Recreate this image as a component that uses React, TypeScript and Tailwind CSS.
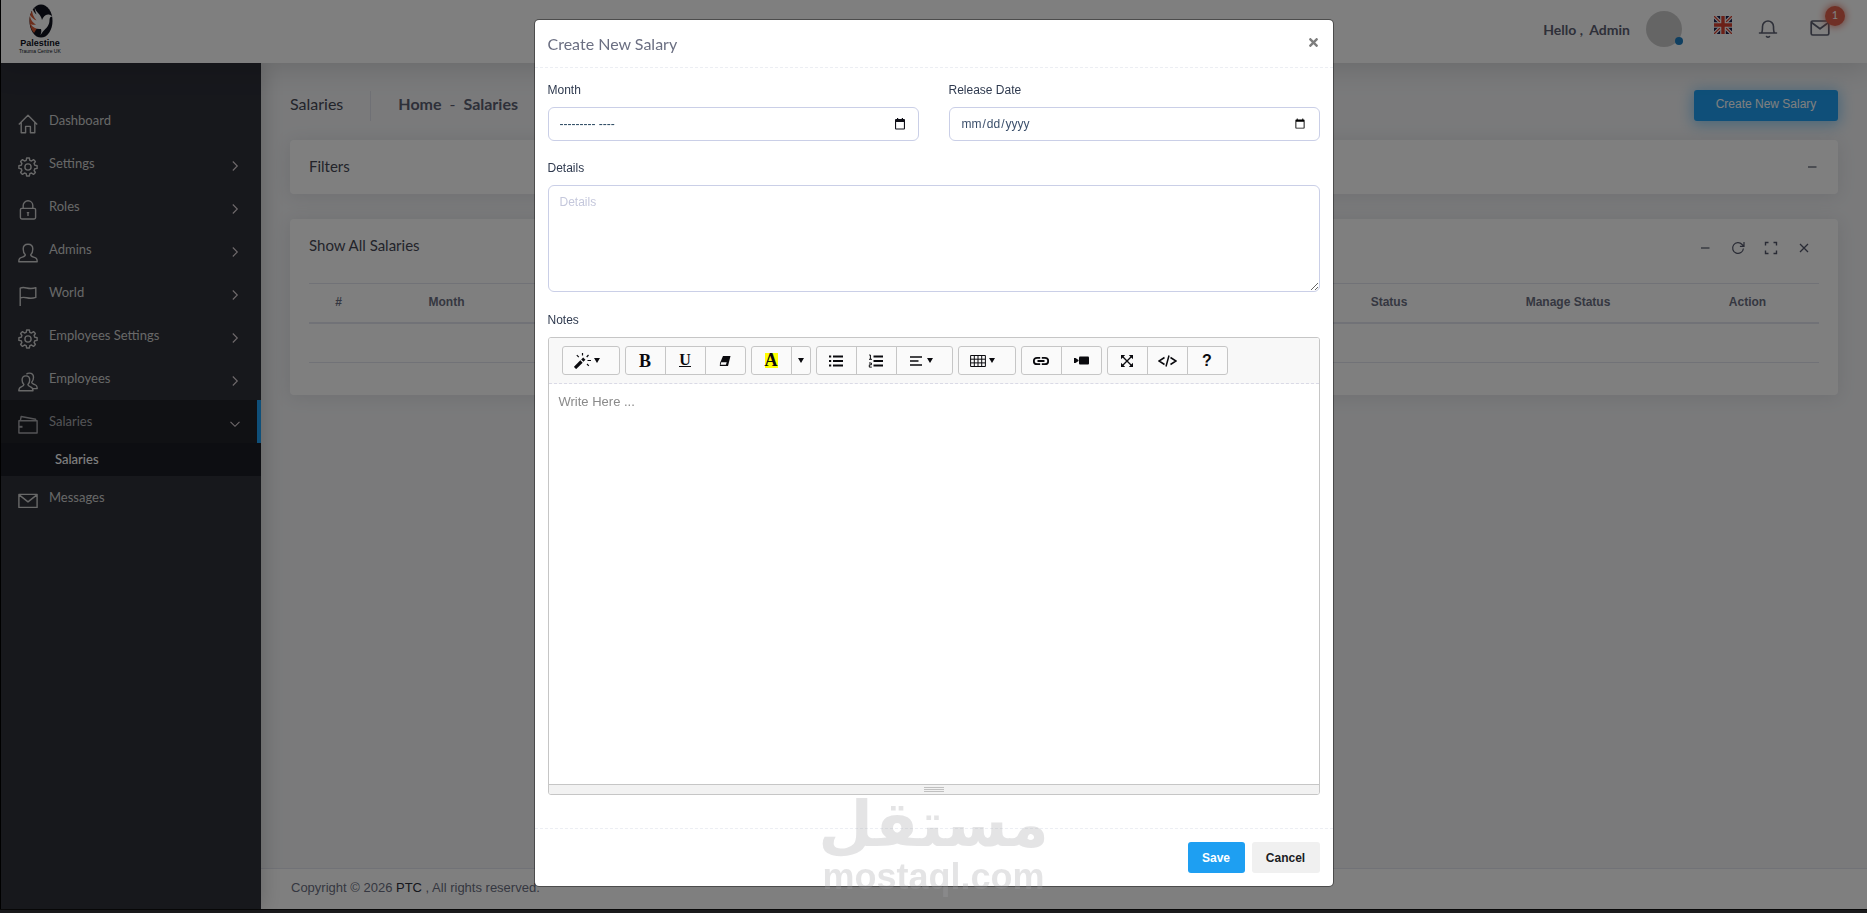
import React from "react";
import { FaTimes } from "react-icons/fa";

type IconProps = { className?: string; children: React.ReactNode };

function LineIcon({ className = "size-5", children }: IconProps) {
  return (
    <svg viewBox="0 0 20 20" className={className} fill="none" stroke="currentColor" strokeWidth="1.400" strokeLinejoin="round" aria-hidden="true">
      {children}
    </svg>
  );
}

const HomeIcon = () => (
  <LineIcon>
    <path d="M.8 10.400 10 1.200l9.200 9.200M3.200 8.600v10.200h4.400v-6.400h4.800v6.400h4.400V8.600" />
  </LineIcon>
);
const GearIcon = () => (
  <LineIcon>
    <circle cx="10" cy="10" r="3.100" />
    <path d="M8.600 1h2.800l.4 2.300 1.700.7 2-1.400 1.900 1.900-1.300 2 .7 1.700 2.300.4v2.800l-2.300.4-.7 1.700 1.300 2-1.900 1.900-2-1.400-1.700.7-.4 2.300H8.600l-.4-2.300-1.700-.7-2 1.400-1.900-1.900 1.300-2-.7-1.700L.9 11.400V8.600l2.300-.4.7-1.700-1.300-2 1.900-1.900 2 1.400 1.700-.7z" />
  </LineIcon>
);
const LockIcon = () => (
  <LineIcon>
    <rect x="2.400" y="8.400" width="15.200" height="10.600" rx="1.400" />
    <path d="M5.200 8.400V5.600a4.800 4.800 0 0 1 9.600 0v2.800M10 12v4M8.800 12.600h2.400" />
  </LineIcon>
);
const UserIcon = () => (
  <LineIcon>
    <path d="M.8 18.800c0-3.300 1-3.900 3.600-4.700 2-.6 2.900-.9 2.900-2.300-1.600-1.400-2.100-3.500-2.100-5.800C5.200 3 7 1.200 10 1.200S14.800 3 14.800 6c0 2.300-.5 4.400-2.100 5.800 0 1.400.9 1.700 2.900 2.300 2.600.8 3.600 1.400 3.600 4.700z" />
  </LineIcon>
);
const UsersIcon = () => (
  <LineIcon>
    <path d="M.8 18.800c0-2.900.8-3.500 2.900-4.200 1.500-.5 2.200-.8 2.200-2C4.600 11.400 4.100 9.900 4.100 8c0-2.600 1.400-4.100 3.800-4.100S11.700 5.400 11.700 8c0 1.900-.5 3.400-1.800 4.600 0 1.200.7 1.500 2.200 2 2.100.7 2.900 1.300 2.900 4.200z" />
    <path d="M8.400 2.200c.8-.8 1.800-1.100 2.900-1.100 2.700 0 4.200 1.500 4.200 4.200 0 2-.5 3.700-1.800 4.900 0 1.300.7 1.500 2.400 2.100 2.300.8 3.100 1.300 3.100 4.300h-4.600" />
  </LineIcon>
);
const FlagIcon = () => (
  <LineIcon>
    <path d="M2.200 20V2.200c5-2.400 8 2.200 15.600-.6v9.800c-7.600 2.800-10.600-1.800-15.600.6" />
  </LineIcon>
);
const WalletIcon = () => (
  <LineIcon>
    <path d="M.9 5.700h18.200v12.300H.9zM2.400 5.400l.8-3.900L17.600 4.300v1.400" />
    <path d="M1 11.800h3.500" strokeWidth="2" />
  </LineIcon>
);
const MailIcon = () => (
  <LineIcon>
    <path d="M.9 3.400h18.200v13H.9zM1.200 3.900l8.800 7 8.800-7" />
  </LineIcon>
);

const Chevron = ({ down = false }: { down?: boolean }) => (
  <svg viewBox="0 0 10 10" className="size-[10px]" fill="none" stroke="currentColor" strokeWidth="1.100" aria-hidden="true">
    {down ? <path d="M.5 2.800 5 7.300l4.500-4.500" /> : <path d="M2.800.5 7.300 5 2.800 9.500" />}
  </svg>
);

const menu = [
  { label: "Dashboard", icon: HomeIcon, leaf: true },
  { label: "Settings", icon: GearIcon },
  { label: "Roles", icon: LockIcon },
  { label: "Admins", icon: UserIcon },
  { label: "World", icon: FlagIcon },
  { label: "Employees Settings", icon: GearIcon },
  { label: "Employees", icon: UsersIcon },
  { label: "Salaries", icon: WalletIcon, open: true },
  { label: "Messages", icon: MailIcon, leaf: true },
];

function Sidebar() {
  return (
    <nav className="z-10 w-[261px] shrink-0 border-l border-black bg-[#2e3039] pt-9 font-[Lato,sans-serif] text-[13px] text-[#d0d0d0] shadow-[1px_0_20px_rgba(0,0,0,0.2)]">
      <ul>
        {menu.map(({ label, icon: Icon, leaf, open }) => (
          <li key={label}>
            <a
              href="#"
              className={
                open
                  ? "flex h-[43px] items-center border-r-4 border-[#1e9ff2] bg-[#202229] pr-[17px] pl-[17px] text-[#a8a9ad]"
                  : "flex h-[43px] items-center pr-[21px] pl-[17px]"
              }
            >
              <span className="pt-[7px]">
                <Icon />
              </span>
              <span className="ml-[11px] flex-1">{label}</span>
              {!leaf && (
                <span className="pt-1 text-[#e0d5d8]">
                  <Chevron down={open} />
                </span>
              )}
            </a>
            {open && (
              <a href="#" className="flex h-[33px] items-center bg-[#1b1c24] pl-[54px] font-medium text-white">
                Salaries
              </a>
            )}
          </li>
        ))}
      </ul>
    </nav>
  );
}

function Logo() {
  return (
    <a href="#" className="flex flex-col items-center self-start pt-[2px] font-['Liberation_Sans',sans-serif] text-[#0c1020]">
      <svg viewBox="0 0 26 36" className="h-9 w-[26px]" aria-hidden="true">
        <ellipse cx="14" cy="19" rx="11.500" ry="16.500" fill="#10131f" />
        <path d="M6 7.500C1 13 1.500 25 7 31l5-8z" fill="#d95a35" />
        <path d="M8 1c-1 4 0 7 3 10 2 2 3.500 4 4 7 1-3 3-5.500 6-5.500 1.500 0 2.500.5 4.500 2-2 0-3 1-3 3.500 0 6-3.500 8-6.500 11.500L13.500 33c1-3 1-4.500.5-6-4 .5-8-1-10.500-5 2 1 4 1 5.500.5C5.500 20.500 3 17 3 13c2 3 4 4.500 6.500 5.500C6.500 15 4.500 11 5 6c1 3 2.500 5 4.500 6.500C8 9 7 5 8 1z" fill="#fff" />
      </svg>
      <span className="text-[9px] leading-[10px] font-bold">Palestine</span>
      <span className="text-[5px] leading-[6px]">Trauma Centre UK</span>
    </a>
  );
}

function UkFlag() {
  return (
    <svg viewBox="0 0 18 18" className="size-[18px]" aria-label="English">
      <path fill="#1b1f4e" d="M0 0h18v18H0z" />
      <path d="M0 0l18 18M18 0 0 18" stroke="#fff" strokeWidth="3.600" />
      <path d="M0 0l18 18M18 0 0 18" stroke="#d8402f" strokeWidth="1.300" />
      <path d="M9 0v18M0 9h18" stroke="#fff" strokeWidth="5.600" />
      <path d="M9 0v18M0 9h18" stroke="#d8402f" strokeWidth="3.400" />
    </svg>
  );
}

function TopBar() {
  return (
    <header className="z-20 flex h-[63px] items-center justify-between border-l border-black bg-white pr-[37px] pl-[18px] text-[#5c6072] shadow-[0_2px_30px_2px_rgba(0,0,0,0.15)]">
      <Logo />
      <div className="flex items-center pb-[6px]">
        <span className="pt-[2px] font-[Lato,sans-serif] text-[14px] font-bold whitespace-pre">Hello ,  Admin</span>
        <span className="relative ml-4 size-9 rounded-full bg-[#cbcbcb]">
          <span className="absolute right-[-1px] bottom-[2px] size-2 rounded-full bg-[#1e7fc2]" />
        </span>
        <a href="#" className="mr-[26px] ml-8 pb-2">
          <UkFlag />
        </a>
        <button type="button" aria-label="Notifications">
          <svg viewBox="0 0 20 20" className="size-5" fill="none" stroke="currentColor" strokeWidth="1.600" strokeLinejoin="round" strokeLinecap="round">
            <path d="M1.500 14h17M3.500 14c1-1.300 1-3 1-6.500a5.500 5.500 0 0 1 11 0c0 3.500 0 5.200 1 6.500M8.500 17.500c.8.900 2.200.9 3 0" />
          </svg>
        </button>
        <button type="button" aria-label="Inbox" className="relative ml-8">
          <svg viewBox="0 0 20 20" className="size-5" fill="none" stroke="currentColor" strokeWidth="1.700" strokeLinejoin="round">
            <rect x="1.200" y="2" width="17.600" height="14" rx="1.500" />
            <path d="m1.500 3.500 8.500 6.300 8.500-6.300" />
          </svg>
          <span className="absolute -top-[13px] -right-[15px] flex size-5 items-center justify-center rounded-full bg-[#e0614c] font-[Lato,sans-serif] text-[11px] text-white shadow-[0_0_8px_#e0614c]">
            1
          </span>
        </button>
      </div>
    </header>
  );
}

function CardTools({ full = false }: { full?: boolean }) {
  return (
    <div className="flex items-center gap-[19px] text-[#53576a]">
      <button type="button" aria-label="Collapse">
        <svg viewBox="0 0 14 14" className="size-[14px]" fill="none" stroke="currentColor" strokeWidth="1.200">
          <path d="M3 7h8.500" />
        </svg>
      </button>
      {full && (
        <>
          <button type="button" aria-label="Reload">
            <svg viewBox="0 0 14 14" className="size-[14px]" fill="none" stroke="currentColor" strokeWidth="1.200">
              <path d="M12.400 7.500a5.400 5.400 0 1 1-1.300-4L13 5.200M13 1v4.300H8.900" />
            </svg>
          </button>
          <button type="button" aria-label="Expand">
            <svg viewBox="0 0 14 14" className="size-[14px]" fill="none" stroke="currentColor" strokeWidth="1.400">
              <path d="M1.500 4.500v-3h3M9.500 1.500h3v3M12.500 9.500v3h-3M4.500 12.500h-3v-3" />
            </svg>
          </button>
          <button type="button" aria-label="Close card">
            <svg viewBox="0 0 14 14" className="size-[14px]" fill="none" stroke="currentColor" strokeWidth="1.300">
              <path d="m3 3 8 8M11 3l-8 8" />
            </svg>
          </button>
        </>
      )}
    </div>
  );
}

const th = "h-[39px] border-t border-b-2 border-[#e3e5ee] pb-[2px] font-bold";

function Content() {
  return (
    <main className="flex-1 px-[29px] pt-[27px]">
      <div className="flex h-[31px] items-center font-[Lato,sans-serif] text-[16px] text-[#464855]">
        <h3 className="pb-1">Salaries</h3>
        <span className="ml-[27px] h-[30px] border-l border-[#dfe1ea]" />
        <nav className="ml-[27px] flex gap-2 pb-1 font-bold text-[#5c6072]">
          <a href="#">Home</a>
          <span className="font-normal">-</span>
          <a href="#">Salaries</a>
        </nav>
        <button
          type="button"
          className="ml-auto h-[31px] w-36 rounded-[3px] bg-[#1e9ff2] pb-1 font-['Liberation_Sans',sans-serif] text-[12px] text-white shadow-[0_2px_14px_2px_rgba(30,159,242,0.45)]"
        >
          Create New Salary
        </button>
      </div>

      <section className="mt-[19px] flex h-[54px] items-center justify-between rounded bg-white pr-[19px] pl-[19px] shadow-[0_2px_18px_1px_rgba(49,53,72,0.1)]">
        <h4 className="pb-[2px] font-[Lato,sans-serif] text-[15px] text-[#464855]">Filters</h4>
        <CardTools />
      </section>

      <section className="mt-[25px] rounded bg-white px-[19px] pb-8 shadow-[0_2px_18px_1px_rgba(49,53,72,0.1)]">
        <div className="flex h-16 items-center justify-between pr-2 pb-[10px]">
          <h4 className="pb-[2px] font-[Lato,sans-serif] text-[15px] text-[#464855]">Show All Salaries</h4>
          <span className="pt-1">
            <CardTools full />
          </span>
        </div>
        <table className="w-full table-fixed border-collapse font-['Liberation_Sans',sans-serif] text-[12px] text-[#6b6f82]">
          <colgroup>
            <col className="w-[59px]" />
            <col className="w-[157px]" />
            <col />
            <col className="w-[142px]" />
            <col className="w-[216px]" />
            <col className="w-[143px]" />
          </colgroup>
          <thead>
            <tr>
              <th className={th}>#</th>
              <th className={th}>Month</th>
              <td className="h-[39px] border-t border-b-2 border-[#e3e5ee]" />
              <th className={th}>Status</th>
              <th className={th}>Manage Status</th>
              <th className={th}>Action</th>
            </tr>
          </thead>
          <tbody>
            <tr>
              <td colSpan={6} className="h-10 border-b border-[#e3e5ee]" />
            </tr>
          </tbody>
        </table>
      </section>
    </main>
  );
}

const btn = "flex h-[29px] w-[41px] items-center justify-center border border-[#c6c6c6] bg-[#fafafa] -ml-px first:ml-0 first:rounded-l-[3px] last:rounded-r-[3px]";
const wideBtn = "flex h-[29px] w-[58px] items-center justify-center gap-[3px] border border-[#c6c6c6] bg-[#fafafa] first:rounded-l-[3px] last:rounded-r-[3px] pr-2";

const Caret = () => (
  <svg viewBox="0 0 6 5" className="h-[5px] w-[6px]" fill="currentColor" aria-hidden="true">
    <path d="M0 0h6L3 5z" />
  </svg>
);

function ToolIcon({ children }: { children: React.ReactNode }) {
  return (
    <svg viewBox="0 0 16 16" className="size-4" fill="none" stroke="currentColor" strokeWidth="1.800" aria-hidden="true">
      {children}
    </svg>
  );
}

function Toolbar() {
  return (
    <div className="flex flex-wrap gap-[5px] border-b border-dashed border-[#dadae6] bg-[#f8f8f8] px-[13px] pt-2 pb-2 text-[#0a0a0e]">
      <div className="flex">
        <button type="button" aria-label="Style" className={wideBtn}>
          <svg viewBox="0 0 17 16" className="h-4 w-[17px]" fill="none" stroke="currentColor" aria-hidden="true">
            <path d="m1 15 6.500-6.500" strokeWidth="3.200" />
            <path d="m8.300 7.700 2-2" strokeWidth="3.200" />
            <path d="M8.500 0v2.500M2.800 2.200l2 2M14.500 2l-1.800 2M13.500 7.500H17M13 11l1.800 1.800" strokeWidth="1.200" />
          </svg>
          <Caret />
        </button>
      </div>
      <div className="flex">
        <button type="button" aria-label="Bold" className={btn}>
          <span className="font-['Liberation_Serif',serif] text-[18px] leading-4 font-bold">B</span>
        </button>
        <button type="button" aria-label="Underline" className={btn}>
          <span className="border-b border-current font-['Liberation_Serif',serif] text-[16px] leading-[12px] font-bold">U</span>
        </button>
        <button type="button" aria-label="Remove Font Style" className={btn}>
          <svg viewBox="0 0 12 12" className="size-3" aria-hidden="true">
            <path d="M4 1h7.500L9 11H.8L1 8z" fill="currentColor" />
            <path d="M2.200 7.200h5.500l-.8 2.600H1.600z" fill="#fafafa" />
          </svg>
        </button>
      </div>
      <div className="flex">
        <button type="button" aria-label="Recent Color" className={btn}>
          <span className="bg-[#ffff00] font-['Liberation_Serif',serif] text-[18px] leading-[15px] font-bold">A</span>
        </button>
        <button
          type="button"
          aria-label="More Color"
          className="-ml-px flex h-[29px] w-5 items-center justify-center rounded-r-[3px] border border-[#c6c6c6] bg-[#fafafa]"
        >
          <Caret />
        </button>
      </div>
      <div className="flex">
        <button type="button" aria-label="Unordered list" className={btn}>
          <ToolIcon>
            <path d="M5 3.500h10M5 8h10M5 12.500h10M1 3.500h2.200M1 8h2.200M1 12.500h2.200" />
          </ToolIcon>
        </button>
        <button type="button" aria-label="Ordered list" className={btn}>
          <ToolIcon>
            <path d="M5.500 3.500H15M5.500 8H15M5.500 12.500H15" />
            <path d="M1.200 2h1.200v4M1 6.300h3M1 10h2.400v1.800H1.300v2.300h2.500" strokeWidth="1" />
          </ToolIcon>
        </button>
        <button
          type="button"
          aria-label="Paragraph"
          className="-ml-px flex h-[29px] w-[57px] items-center justify-center gap-[3px] rounded-r-[3px] border border-[#c6c6c6] bg-[#fafafa] pr-2"
        >
          <ToolIcon>
            <path d="M2 4h12M2 8h8.500M2 12h12" strokeWidth="1.600" />
          </ToolIcon>
          <Caret />
        </button>
      </div>
      <div className="flex">
        <button type="button" aria-label="Table" className={wideBtn}>
          <ToolIcon>
            <path d="M.6 2.500h14.800v11H.6zM.6 6.200h14.800M.6 9.900h14.800M4.300 2.500v11M8 2.500v11M11.700 2.500v11" strokeWidth="1" />
          </ToolIcon>
          <Caret />
        </button>
      </div>
      <div className="flex">
        <button type="button" aria-label="Link" className={btn}>
          <ToolIcon>
            <path d="M7.200 4.800H4a3.200 3.200 0 0 0 0 6.400h3.200M8.800 4.800H12a3.200 3.200 0 0 1 0 6.400H8.800M4.500 8h7" />
          </ToolIcon>
        </button>
        <button type="button" aria-label="Video" className={btn}>
          <svg viewBox="0 0 15 9" className="h-[9px] w-[15px]" fill="currentColor" aria-hidden="true">
            <rect x="5" y="0.500" width="10" height="8" rx="1" />
            <path d="M0 2h1.500L4.500 4V1v7-3L1.500 7H0z" />
          </svg>
        </button>
      </div>
      <div className="flex">
        <button type="button" aria-label="Full Screen" className={btn}>
          <svg viewBox="0 0 14 14" className="size-[14px]" aria-hidden="true">
            <path d="m2.500 2.500 9 9M11.500 2.500l-9 9" stroke="currentColor" strokeWidth="1.400" />
            <path d="M1 1h4.200L1 5.200zM13 1v4.200L8.800 1zM13 13H8.800L13 8.800zM1 13V8.800L5.200 13z" fill="currentColor" />
          </svg>
        </button>
        <button type="button" aria-label="Code View" className={btn}>
          <svg viewBox="0 0 19 12" className="h-3 w-[19px]" fill="none" stroke="currentColor" strokeWidth="1.500" aria-hidden="true">
            <path d="M6.500 2.500 1 6l5.500 3.500M12.500 2.500 18 6l-5.500 3.500M11 .5 8 11.500" />
          </svg>
        </button>
        <button type="button" aria-label="Help" className={btn}>
          <span className="font-['Liberation_Sans',sans-serif] text-[16px] leading-4 font-bold">?</span>
        </button>
      </div>
    </div>
  );
}

const label = "mb-2 block text-[12px] leading-[18px] text-[#2f3a4f]";
const field = "block w-full rounded-md border border-[#cacfe7] bg-white px-[11px] text-[12px] text-[#3b4f6b] outline-none";

function SalaryModal() {
  return (
    <div role="dialog" aria-labelledby="modal-title" className="relative w-[800px] rounded-[5px] border border-black/40 bg-white bg-clip-padding font-['Liberation_Sans',sans-serif]">
      <div className="flex h-12 items-center justify-between border-b border-dashed border-[#eceef3] px-[13px]">
        <h2 id="modal-title" className="font-[Lato,sans-serif] text-[16px] text-[#6b6f82]">
          Create New Salary
        </h2>
        <button type="button" aria-label="Close" className="pb-[2px] text-[#7d7d7d]">
          <FaTimes className="size-[13px]" />
        </button>
      </div>
      <form>
        <div className="px-[13px] pt-[13px]">
          <div className="grid grid-cols-2 gap-[30px]">
            <div>
              <label htmlFor="month" className={label}>
                Month
              </label>
              <div className="relative">
                <input id="month" type="text" placeholder="--------- ----" className={`${field} h-[34px] placeholder:text-[#1f3f58]`} />
                <button type="button" aria-label="Show month picker" className="absolute top-[11px] right-[13px] text-[#101018]">
                  <svg viewBox="0 0 12 12" className="size-3" aria-hidden="true">
                    <path d="M2 1h1V0h1.200v1h3.600V0H9v1h1a1 1 0 0 1 1 1v8.500a1 1 0 0 1-1 1H2a1 1 0 0 1-1-1V2a1 1 0 0 1 1-1zM2.100 4v6.400h7.800V4z" fill="currentColor" fillRule="evenodd" />
                  </svg>
                </button>
              </div>
            </div>
            <div>
              <label htmlFor="release" className={label}>
                Release Date
              </label>
              <input id="release" type="date" className={`${field} h-[34px]`} />
            </div>
          </div>
          <div className="mt-[18px]">
            <label htmlFor="details" className={label}>
              Details
            </label>
            <textarea id="details" placeholder="Details" className={`${field} h-[107px] resize-y py-[7px] placeholder:text-[#c5c8dc]`} />
          </div>
          <div className="mt-[19px]">
            <label htmlFor="notes" className={label}>
              Notes
            </label>
            <div className="overflow-hidden rounded-[3px] border border-[#c6c6c6]">
              <Toolbar />
              <textarea
                id="notes"
                placeholder="Write Here ..."
                className="block h-[400px] w-full resize-none px-[10px] py-2 text-[13px] text-[#2b335e] outline-none placeholder:text-[#8a8a8a]"
              />
              <div className="flex h-[10px] flex-col items-center justify-center gap-px border-t border-[#c6c6c6] bg-[#f2f2f2]">
                <span className="h-px w-5 bg-[#c0c0c0]" />
                <span className="h-px w-5 bg-[#c0c0c0]" />
                <span className="h-px w-5 bg-[#c0c0c0]" />
              </div>
            </div>
          </div>
        </div>
        <div className="mt-[33px] flex justify-end gap-[7px] border-t border-dashed border-[#eceef3] px-[13px] py-[13px] text-[12px] font-bold">
          <button type="submit" className="h-[31px] w-[57px] rounded-[3px] bg-[#1e9ff2] text-white">
            Save
          </button>
          <button type="button" className="h-[31px] w-[68px] rounded-[3px] bg-[#f0f0f0] text-[#1b1c24]">
            Cancel
          </button>
        </div>
      </form>
      <div className="pointer-events-none absolute bottom-[-12px] left-1/2 flex -translate-x-1/2 flex-col items-center text-[#a0a0a4] opacity-[0.28]">
        <span lang="ar" dir="rtl" className="font-['DejaVu_Sans',sans-serif] text-[63px] leading-[62px] font-bold">
          مستقل
        </span>
        <span className="text-[36px] leading-[42px] font-bold">mostaql.com</span>
      </div>
    </div>
  );
}

export default function App() {
  return (
    <div className="flex min-h-screen flex-col bg-[#f4f5f7]">
      <TopBar />
      <div className="flex flex-1">
        <Sidebar />
        <div className="flex flex-1 flex-col">
          <Content />
          <footer className="flex h-[41px] items-center border-t border-[#e3e5ee] bg-white px-[30px] pb-[3px] font-['Liberation_Sans',sans-serif] text-[13px] whitespace-pre text-[#6b6f82]">
            Copyright © 2026 <a href="#" className="font-medium text-[#2c2e39]">PTC</a> , All rights reserved.
          </footer>
        </div>
      </div>
      <div className="h-1 border-t border-[#111] bg-[#36363b]" />

      <div className="fixed inset-0 z-50 flex items-start justify-center overflow-auto bg-black/50 pt-[19px]">
        <SalaryModal />
      </div>
    </div>
  );
}
